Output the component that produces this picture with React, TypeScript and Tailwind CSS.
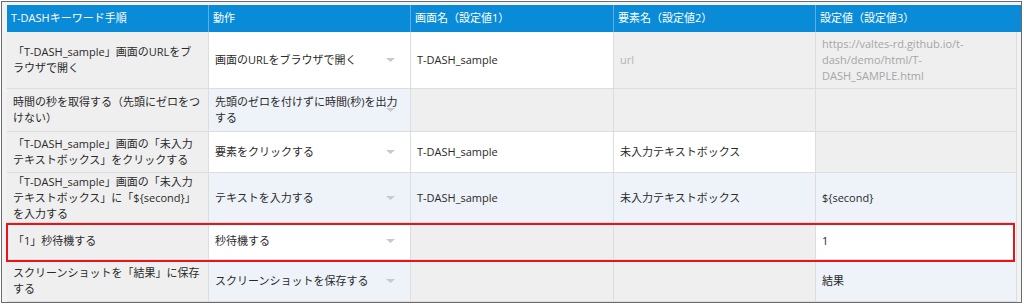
import React from "react";

type Bg = "g" | "w" | "b";
type Cell = { t?: string[]; bg: Bg; arrow?: boolean; muted?: boolean; ph?: boolean };

const bgCls: Record<Bg, string> = {
  g: "bg-[#efefef]",
  w: "bg-white",
  b: "bg-[#eef3f9]",
};

const rows: { h: string; cells: Cell[] }[] = [
  {
    h: "h-[57px]",
    cells: [
      { t: ["「T-DASH_sample」画面のURLをブ", "ラウザで開く"], bg: "g" },
      { t: ["画面のURLをブラウザで開く"], bg: "w", arrow: true },
      { t: ["T-DASH_sample"], bg: "w" },
      { t: ["url"], bg: "g", ph: true },
      { t: ["https://valtes-rd.github.io/t-", "dash/demo/html/T-", "DASH_SAMPLE.html"], bg: "g", muted: true },
    ],
  },
  {
    h: "h-[43px]",
    cells: [
      { t: ["時間の秒を取得する（先頭にゼロをつ", "けない）"], bg: "g" },
      { t: ["先頭のゼロを付けずに時間(秒)を出力", "する"], bg: "b", arrow: true },
      { bg: "g" },
      { bg: "g" },
      { bg: "g" },
    ],
  },
  {
    h: "h-[41px]",
    cells: [
      { t: ["「T-DASH_sample」画面の「未入力", "テキストボックス」をクリックする"], bg: "g" },
      { t: ["要素をクリックする"], bg: "w", arrow: true },
      { t: ["T-DASH_sample"], bg: "w" },
      { t: ["未入力テキストボックス"], bg: "w" },
      { bg: "g" },
    ],
  },
  {
    h: "h-[50px]",
    cells: [
      { t: ["「T-DASH_sample」画面の「未入力", "テキストボックス」に「${second}」", "を入力する"], bg: "g" },
      { t: ["テキストを入力する"], bg: "b", arrow: true },
      { t: ["T-DASH_sample"], bg: "b" },
      { t: ["未入力テキストボックス"], bg: "b" },
      { t: ["${second}"], bg: "b" },
    ],
  },
  {
    h: "h-[37px]",
    cells: [
      { t: ["「1」秒待機する"], bg: "g" },
      { t: ["秒待機する"], bg: "w", arrow: true },
      { bg: "g" },
      { bg: "g" },
      { t: ["1"], bg: "w" },
    ],
  },
  {
    h: "h-[42px]",
    cells: [
      { t: ["スクリーンショットを「結果」に保存", "する"], bg: "g" },
      { t: ["スクリーンショットを保存する"], bg: "b", arrow: true },
      { bg: "g" },
      { bg: "g" },
      { t: ["結果"], bg: "b" },
    ],
  },
];

const headers = ["T-DASHキーワード手順", "動作", "画面名（設定値1）", "要素名（設定値2）", "設定値（設定値3）"];
const widths = ["w-[202px]", "w-[202px]", "w-[203px]", "w-[202px]", "w-[201px]"];

function Arrow() {
  return (
    <svg className="absolute right-[15px] top-1/2 -translate-y-1/2" width="9" height="4" viewBox="0 0 9 4">
      <path d="M0 0 L9 0 L4.5 4 Z" fill="#c9c9c9" />
    </svg>
  );
}

export default function App() {
  return (
    <div
      className="w-[1024px] h-[305px] bg-white overflow-hidden"
      style={{ fontFamily: '"Open Sans", "Noto Sans CJK JP", sans-serif' }}
    >
      <div className="relative ml-[1px] mt-[1px] w-[1021px] h-[302px] border border-[#6b6b6b] bg-[#f2f2f2] pl-[5px] pt-[3px] overflow-hidden">
        <div className="flex h-[27px] bg-[#0a8bd8] text-white text-[11px]">
          {headers.map((h, i) => (
            <div
              key={i}
              className={`${widths[i]} flex items-center pl-[4px] border-r border-[#5eaee6] ${i === 4 ? "border-r-0" : ""}`}
            >
              {h}
            </div>
          ))}
        </div>
        {rows.map((r, ri) => (
          <div key={ri} className={`flex ${r.h}`}>
            {r.cells.map((c, ci) => (
              <div
                key={ci}
                className={`${widths[ci]} ${bgCls[c.bg]} relative flex items-center pl-[6px] pr-[6px] border-r border-b border-[#dddddd] text-[11px] leading-[16px] ${
                  c.muted ? "text-[#a6a6a6]" : c.ph ? "text-[#b5b5b5]" : "text-[#2a2a2a]"
                }`}
              >
                {c.t && (
                  <div className="whitespace-nowrap">
                    {c.t.map((l, li) => (
                      <div key={li}>{l}</div>
                    ))}
                  </div>
                )}
                {c.arrow && <Arrow />}
              </div>
            ))}
          </div>
        ))}
        <div className="absolute left-[4px] top-[221px] w-[1009px] h-[39px] border-2 border-[#e8141b] pointer-events-none" />
      </div>
    </div>
  );
}
